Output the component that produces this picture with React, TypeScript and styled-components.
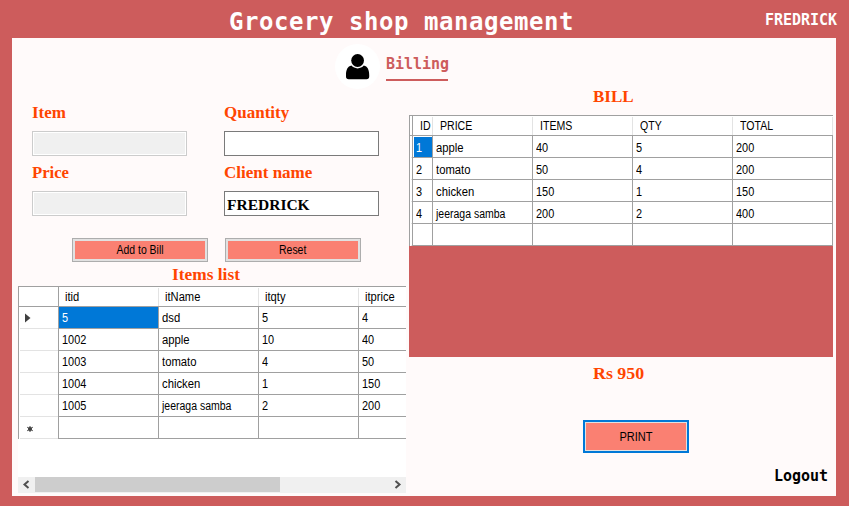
import React from "react";
import styled, { createGlobalStyle } from "styled-components";

const GlobalStyle = createGlobalStyle`
  * { box-sizing: border-box; }
  body { margin: 0; background: #cd5c5c; overflow: hidden; }
`;

const Window = styled.div`
  width: 849px;
  height: 506px;
  background: #cd5c5c;
  display: grid;
  grid-template-rows: 38px 458px 10px;
`;

const TitleBar = styled.header`
  display: flex;
  justify-content: space-between;
  align-items: flex-start;
  padding: 7px 12px 0 229px;
`;

const Mono = styled.span<{ $size?: number; $spacing?: number; $color: string }>`
  font-family: "DejaVu Sans Mono", monospace;
  font-weight: bold;
  font-size: ${(p) => p.$size ?? 15}px;
  letter-spacing: ${(p) => p.$spacing ?? -0.03}px;
  line-height: ${(p) => (p.$size ? 30 : 20)}px;
  color: ${(p) => p.$color};
  white-space: nowrap;
`;

const UserName = styled(Mono)`
  margin-top: 3px;
`;

const Panel = styled.main`
  margin: 0 13px 0 12px;
  background: #fffafa;
  padding-left: 6px;
  display: grid;
  grid-template-rows: 48px 410px;
`;

const PageHeading = styled.div`
  display: flex;
  align-items: flex-start;
  gap: 6px;
  padding: 6px 0 0 317px;
`;

const Avatar = styled.svg`
  flex: none;
  width: 45px;
  height: 45px;
`;

const Tab = styled.div`
  margin-top: 10px;
  height: 27px;
  width: 62px;
  border-bottom: 2px solid #cd5c5c;
`;

const Columns = styled.div`
  display: grid;
  grid-template-columns: 388px 424px;
  column-gap: 3px;
`;

const Column = styled.section`
  display: flex;
  flex-direction: column;
  min-width: 0;
`;

const Form = styled.div`
  display: grid;
  grid-template-columns: 155px 155px;
  column-gap: 37px;
  row-gap: 7px;
  padding: 17px 0 0 14px;
`;

const Field = styled.label`
  display: flex;
  flex-direction: column;
  gap: 8px;
`;

const Caption = styled.span<{ $scale?: number }>`
  align-self: flex-start;
  font: bold 17px/20px "Liberation Serif", serif;
  color: #ff4500;
  white-space: nowrap;
  transform: scaleX(${(p) => p.$scale ?? 1});
  transform-origin: left;
`;

const Input = styled.input`
  height: 25px;
  width: 155px;
  border: 1px solid #7a7a7a;
  border-radius: 0;
  background: #fff;
  padding: 2px 2px 0;
  outline: none;
  font: bold 15.5px "Liberation Serif", serif;
  color: #000;
  &:disabled {
    border-color: #ccc;
    background: #f0f0f0;
    box-shadow: inset 0 0 0 1px #fff;
  }
`;

const Buttons = styled.div`
  display: flex;
  gap: 17px;
  padding: 22px 0 0 54px;
`;

const Button = styled.button<{ $focused?: boolean }>`
  width: ${(p) => (p.$focused ? 106 : 136)}px;
  height: ${(p) => (p.$focused ? 33 : 24)}px;
  border: ${(p) => (p.$focused ? "2px solid #0078d7" : "1px solid #adadad")};
  box-shadow: inset 0 0 0 ${(p) => (p.$focused ? 1 : 2)}px #e1e1e1;
  background: #fa8072;
  padding: 0;
  font: 12px "Liberation Sans", sans-serif;
  color: #000;
`;

const Squeezed = styled.span<{ $scale?: number; $center?: boolean }>`
  display: inline-block;
  white-space: nowrap;
  transform: scaleX(${(p) => p.$scale ?? 0.92});
  transform-origin: ${(p) => (p.$center ? "center" : "left")};
`;

const ListTitle = styled.div`
  display: flex;
  padding: 3px 0 0 154px;
`;

const ItemsGrid = styled.div`
  height: 207px;
  background: #fff;
  display: flex;
  flex-direction: column;
  justify-content: space-between;
  overflow: hidden;
  margin-top: 1px;
`;

const Rows = styled.div`
  border-top: 1px solid #a0a0a0;
  border-left: 1px solid #a0a0a0;
  background: #fff;
  font: 12px "Liberation Sans", sans-serif;
  color: #000;
  overflow: hidden;
`;

const Row = styled.div<{ $template: string; $head?: boolean }>`
  display: grid;
  grid-template-columns: ${(p) => p.$template};
  height: ${(p) => (p.$head ? 20 : 22)}px;
`;

const HeadCell = styled.div<{ $indent?: number }>`
  border-bottom: 1px solid #a0a0a0;
  line-height: 19px;
  height: 20px;
  padding: 1px 0 0 ${(p) => p.$indent ?? 6}px;
  overflow: hidden;
  background: linear-gradient(#e3e3e3, #e3e3e3) right bottom / 1px 18px no-repeat;
`;

const Corner = styled.div`
  border-right: 1px solid #a0a0a0;
  border-bottom: 1px solid #a0a0a0;
`;

const Cell = styled.div<{ $selected?: boolean; $drop?: number; $inset?: boolean }>`
  border-right: 1px solid #a0a0a0;
  border-bottom: 1px solid #a0a0a0;
  line-height: 21px;
  padding: ${(p) => p.$drop ?? 1}px 0 0 3px;
  height: 22px;
  background: ${(p) => (p.$selected ? "#0078d7" : "#fff")};
  color: ${(p) => (p.$selected ? "#fff" : "#000")};
  box-shadow: ${(p) => (p.$inset ? "inset 1px 1px 0 #fff" : "none")};
`;

const RowHeader = styled.div`
  border-right: 1px solid #a0a0a0;
  display: flex;
  align-items: center;
  padding-left: 6px;
  background: linear-gradient(#e3e3e3, #e3e3e3) 1px bottom / 38px 1px no-repeat;
`;

const Stub = styled.div`
  border-right: 1px solid #a0a0a0;
  background: linear-gradient(#e3e3e3, #e3e3e3) 1px bottom / 1px 1px no-repeat;
`;

const ScrollBar = styled.div`
  height: 16px;
  background: #f0f0f0;
  display: grid;
  grid-template-columns: 17px 245px 1fr 17px;
`;

const Arrow = styled.svg`
  width: 17px;
  height: 16px;
`;

const Thumb = styled.div`
  height: 15px;
  background: #cdcdcd;
`;

const BillTitle = styled.div`
  display: flex;
  height: 29px;
  padding: 1px 0 0 184px;
`;

const BillGrid = styled.div`
  height: 242px;
  background: #cd5c5c;
`;

const Total = styled.div`
  display: flex;
  padding: 7px 0 0 184px;
`;

const PrintRow = styled.div`
  padding: 36px 0 0 174px;
  display: flex;
`;

const LogoutRow = styled.div`
  display: flex;
  justify-content: flex-end;
  padding: 13px 5px 0 0;
`;

const items = [
  ["5", "dsd", "5", "4"],
  ["1002", "apple", "10", "40"],
  ["1003", "tomato", "4", "50"],
  ["1004", "chicken", "1", "150"],
  ["1005", "jeeraga samba", "2", "200"],
  ["", "", "", ""],
];

const bill = [
  ["1", "apple", "40", "5", "200"],
  ["2", "tomato", "50", "4", "200"],
  ["3", "chicken", "150", "1", "150"],
  ["4", "jeeraga samba", "200", "2", "400"],
  ["", "", "", "", ""],
];

const itemCols = "40px 100px 100px 100px 100px";
const billCols = "3px 20px 100px 100px 100px 100px";
const textScale = (t: string) => (/^\d/.test(t) ? 0.91 : t.length > 10 ? 0.875 : 0.94);

function RowMark({ index }: { index: number }) {
  if (index === 0) {
    return (
      <svg width="6" height="10" viewBox="0 0 6 10">
        <path d="M0 0.5V9.5L5.5 5Z" fill="#404040" />
      </svg>
    );
  }
  if (index === items.length - 1) {
    return (
      <svg width="10" height="8" viewBox="0 0 10 8">
        <circle cx="5" cy="5" r="2.1" fill="#404040" />
        <path d="M5 2V8M2.2 3.2L7.8 6.8M7.8 3.2L2.2 6.8" stroke="#404040" strokeWidth="1" />
      </svg>
    );
  }
  return null;
}

export default function App() {
  return (
    <>
      <GlobalStyle />
      <Window>
        <TitleBar>
          <Mono $size={24} $spacing={0.55} $color="#fff">Grocery shop management</Mono>
          <UserName $color="#fff">FREDRICK</UserName>
        </TitleBar>
        <Panel>
          <PageHeading>
            <Avatar viewBox="0 0 45 45">
              <circle cx="22.5" cy="22.5" r="22.5" fill="#fff" />
              <circle cx="22.6" cy="16.5" r="6.4" />
              <path d="M16.4 21.6C18 23.4 20 24.4 22.6 24.4S27.2 23.4 28.8 21.6C32.5 22.3 34.2 26 34.2 31V32.5Q34.2 35.3 31.5 35.3H13.7Q11 35.3 11 32.5V31C11 26 12.7 22.3 16.4 21.6Z" />
            </Avatar>
            <Tab><Mono $color="#cd5c5c">Billing</Mono></Tab>
          </PageHeading>
          <Columns>
            <Column>
              <Form>
                <Field><Caption>Item</Caption><Input disabled /></Field>
                <Field><Caption>Quantity</Caption><Input /></Field>
                <Field><Caption $scale={0.98}>Price</Caption><Input disabled /></Field>
                <Field><Caption>Client name</Caption><Input defaultValue="FREDRICK" /></Field>
              </Form>
              <Buttons>
                <Button><Squeezed $center $scale={0.87}>Add to Bill</Squeezed></Button>
                <Button><Squeezed $center $scale={0.87}>Reset</Squeezed></Button>
              </Buttons>
              <ListTitle><Caption $scale={1.02}>Items list</Caption></ListTitle>
              <ItemsGrid>
                <Rows>
                  <Row $template={itemCols} $head>
                    <Corner />
                    {["itid", "itName", "itqty", "itprice"].map((h) => (
                      <HeadCell key={h}><Squeezed $scale={0.93}>{h}</Squeezed></HeadCell>
                    ))}
                  </Row>
                  {items.map((row, r) => (
                    <Row key={r} $template={itemCols}>
                      <RowHeader><RowMark index={r} /></RowHeader>
                      {row.map((t, c) => (
                        <Cell key={c} $selected={r === 0 && c === 0}>
                          <Squeezed $scale={textScale(t)}>{t}</Squeezed>
                        </Cell>
                      ))}
                    </Row>
                  ))}
                </Rows>
                <ScrollBar>
                  <Arrow viewBox="0 0 17 16"><path d="M10.5 4L6.5 7.5L10.5 11" fill="none" stroke="#505050" strokeWidth="2" /></Arrow>
                  <Thumb />
                  <span />
                  <Arrow viewBox="0 0 17 16"><path d="M6.5 4L10.5 7.5L6.5 11" fill="none" stroke="#505050" strokeWidth="2" /></Arrow>
                </ScrollBar>
              </ItemsGrid>
            </Column>
            <Column>
              <BillTitle><Caption>BILL</Caption></BillTitle>
              <BillGrid>
                <Rows>
                  <Row $template={billCols} $head>
                    <Corner />
                    {["ID", "PRICE", "ITEMS", "QTY", "TOTAL"].map((h) => (
                      <HeadCell key={h} $indent={7}><Squeezed $scale={0.88}>{h}</Squeezed></HeadCell>
                    ))}
                  </Row>
                  {bill.map((row, r) => (
                    <Row key={r} $template={billCols}>
                      <Stub />
                      {row.map((t, c) => (
                        <Cell key={c} $drop={2} $selected={r === 0 && c === 0} $inset={r === 0 && c === 0}>
                          <Squeezed $scale={textScale(t)}>{t}</Squeezed>
                        </Cell>
                      ))}
                    </Row>
                  ))}
                </Rows>
              </BillGrid>
              <Total><Caption $scale={1.05}>Rs 950</Caption></Total>
              <PrintRow>
                <Button $focused><Squeezed $center $scale={0.92}>PRINT</Squeezed></Button>
              </PrintRow>
              <LogoutRow><Mono $color="#000">Logout</Mono></LogoutRow>
            </Column>
          </Columns>
        </Panel>
      </Window>
    </>
  );
}
